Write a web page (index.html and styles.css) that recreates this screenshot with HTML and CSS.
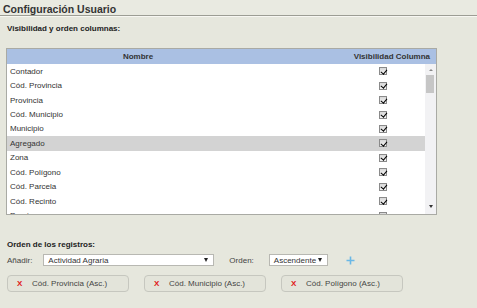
FILE: index.html
```html
<!DOCTYPE html>
<html lang="es">
<head>
<meta charset="utf-8">
<link rel="stylesheet" href="styles.css">
</head>
<body>
<div class="page">
  <div class="title">Configuración Usuario</div>
  <div class="label">Visibilidad y orden columnas:</div>
  <div class="grid">
    <div class="grid-head">
      <div class="h-name">Nombre</div>
      <div class="h-vis">Visibilidad Columna</div>
    </div>
    <div class="grid-body">
      <div class="rows">
        <div class="row"><span>Contador</span><span class="cb on"></span></div>
        <div class="row"><span>Cód. Provincia</span><span class="cb on"></span></div>
        <div class="row"><span>Provincia</span><span class="cb on"></span></div>
        <div class="row"><span>Cód. Municipio</span><span class="cb on"></span></div>
        <div class="row"><span>Municipio</span><span class="cb on"></span></div>
        <div class="row sel"><span>Agregado</span><span class="cb on"></span></div>
        <div class="row"><span>Zona</span><span class="cb on"></span></div>
        <div class="row"><span>Cód. Polígono</span><span class="cb on"></span></div>
        <div class="row"><span>Cód. Parcela</span><span class="cb on"></span></div>
        <div class="row"><span>Cód. Recinto</span><span class="cb on"></span></div>
        <div class="row"><span>Paraje</span><span class="cb"></span></div>
      </div>
      <div class="scroll">
        <div class="arrow up"></div>
        <div class="track"><div class="thumb"></div></div>
        <div class="arrow down"></div>
      </div>
    </div>
  </div>
  <div class="label order-label">Orden de los registros:</div>
  <div class="controls">
    <span class="ctl-label">Añadir:</span>
    <div class="select wide"><span>Actividad Agraria</span><span class="caret"></span></div>
    <span class="ctl-label orden">Orden:</span>
    <div class="select small"><span>Ascendente</span><span class="caret"></span></div>
    <svg class="plus" width="9" height="9" viewBox="0 0 9 9"><path d="M4.5 0.5V8.5M0.5 4.5H8.5" stroke="#6ab8e6" stroke-width="1.6"/></svg>
  </div>
  <div class="chips">
    <div class="chip"><span class="x">X</span><span>Cód. Provincia (Asc.)</span></div>
    <div class="chip"><span class="x">X</span><span>Cód. Municipio (Asc.)</span></div>
    <div class="chip"><span class="x">X</span><span>Cód. Polígono (Asc.)</span></div>
  </div>
</div>
</body>
</html>
```

FILE: styles.css
```css
* { box-sizing: border-box; }
html, body { margin: 0; padding: 0; }
body {
  background: #e6e7dd;
  font-family: "Liberation Sans", Arial, sans-serif;
  font-size: 8px;
  color: #333;
  width: 477px;
  height: 308px;
  overflow: hidden;
}
.title {
  height: 16px;
  padding: 3px 0 0 3px;
  font-size: 10.5px;
  font-weight: bold;
  color: #333;
  background: #e9eae1;
  border-bottom: 1px solid #9c9d94;
  box-shadow: 0 1px 0 #f7f7f2;
}
.label {
  font-weight: bold;
  font-size: 8px;
  color: #222;
  padding-left: 7px;
  margin-top: 8px;
  line-height: 10px;
}
.grid {
  margin: 14px 0 0 6px;
  width: 431px;
  border: 1px solid #a9aaa4;
  background: #fff;
}
.grid-head {
  height: 15px;
  background: #aac0e3;
  display: flex;
  align-items: center;
  font-weight: bold;
  color: #333;
}
.h-name { width: 262px; text-align: center; }
.h-vis { flex: 1; text-align: right; padding-right: 6px; }
.grid-body {
  display: flex;
  height: 150px;
}
.rows {
  flex: 1;
  overflow: hidden;
}
.row {
  height: 14.45px;
  display: flex;
  align-items: center;
  padding-left: 3px;
  color: #333;
}
.row span:first-child { flex: 1; }
.row.sel { background: #d3d3d3; }
.cb {
  width: 8px;
  height: 8px;
  margin-right: 38px;
  border: 1px solid #8a8a8a;
  background: linear-gradient(#d8d8d8, #f4f4f4);
  position: relative;
}
.cb.on::after {
  content: "";
  position: absolute;
  left: 1.5px;
  top: -0.5px;
  width: 2.5px;
  height: 5px;
  border: solid #000;
  border-width: 0 1.6px 1.6px 0;
  transform: rotate(40deg);
}
.scroll {
  width: 11px;
  background: #f2f2f4;
  display: flex;
  flex-direction: column;
  align-items: center;
}
.arrow {
  width: 0; height: 0;
  border-left: 2px solid transparent;
  border-right: 2px solid transparent;
}
.arrow.up { border-bottom: 2px solid #888; margin-top: 5px; }
.arrow.down { border-top: 3px solid #333; margin-bottom: 6px; }
.track { flex: 1; width: 100%; padding: 4px 1px 0 1px; }
.thumb { width: 8px; height: 18px; background: #c6c6c6; }
.order-label { margin-top: 25px; }
.controls {
  display: flex;
  align-items: center;
  margin-top: 4px;
  padding-left: 7px;
  height: 12px;
}
.ctl-label { color: #444; }
.select {
  height: 12px;
  background: #fff;
  border: 1px solid #b8b8b2;
  display: flex;
  align-items: center;
  padding-left: 4px;
  color: #333;
}
.select span:first-child { flex: 1; }
.select.wide { width: 171px; margin-left: 11px; }
.select.small { width: 59px; margin-left: 15px; }
.caret {
  width: 0; height: 0;
  border-left: 2px solid transparent;
  border-right: 2px solid transparent;
  border-top: 4px solid #222;
  margin-right: 5px;
}
.orden { margin-left: 15px; }
.plus { margin-left: 18px; }
.chips {
  display: flex;
  gap: 15px;
  margin: 9px 0 0 7px;
}
.chip {
  width: 122px;
  height: 17px;
  border: 1px solid #c6c7bf;
  border-radius: 4px;
  background: #e3e4da;
  display: flex;
  align-items: center;
  padding-left: 9px;
  color: #444;
}
.chip .x {
  color: #e01818;
  font-weight: bold;
  width: 15px;
}
```
